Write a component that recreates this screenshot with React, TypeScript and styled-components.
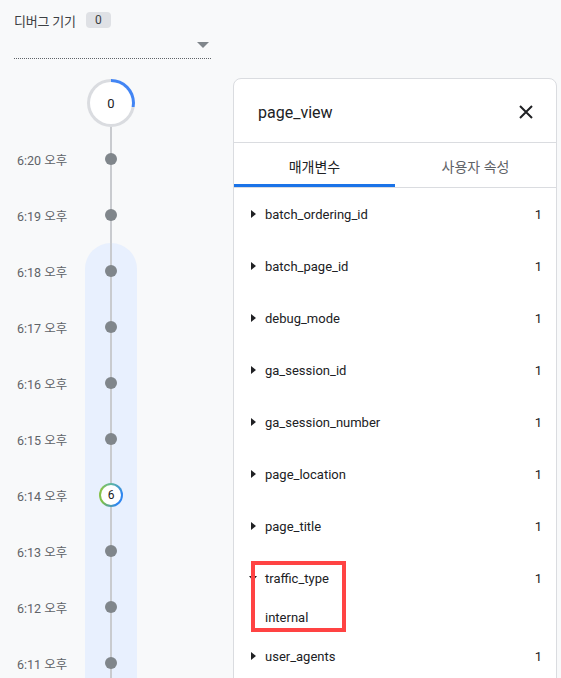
import React from 'react';
import styled, { createGlobalStyle } from 'styled-components';

const GlobalStyle = createGlobalStyle`
  html, body {
    margin: 0;
    padding: 0;
    background: #f8f9fa;
    font-family: Roboto, "Noto Sans CJK KR", "Noto Sans", sans-serif;
    color: #202124;
    overflow: hidden;
  }
  * { box-sizing: border-box; }
`;

const Page = styled.div`
  display: flex;
  width: 561px;
  height: 678px;
  overflow: hidden;
`;

const Side = styled.div`
  width: 233px;
  flex-shrink: 0;
  display: flex;
  flex-direction: column;

  & > * {
    flex-shrink: 0;
  }
`;

const DeviceHeader = styled.div`
  display: flex;
  align-items: center;
  gap: 10px;
  padding: 11px 0 0 14px;
  height: 29px;
`;

const DeviceTitle = styled.span`
  font-size: 13px;
  color: #3c4043;
  letter-spacing: -0.2px;
`;

const Badge = styled.span`
  display: inline-flex;
  align-items: center;
  justify-content: center;
  width: 25px;
  height: 16px;
  border-radius: 4px;
  background: #dfe1e5;
  font-size: 12px;
  color: #3c4043;
`;

const Dropdown = styled.div`
  margin-left: 14px;
  width: 197px;
  height: 30px;
  border-bottom: 1px dotted #5f6368;
  display: flex;
  justify-content: flex-end;
  align-items: flex-start;
  padding-top: 13px;
  padding-right: 2px;
`;

const Caret = styled.span`
  width: 0;
  height: 0;
  border-left: 6px solid transparent;
  border-right: 6px solid transparent;
  border-top: 6px solid #80868b;
`;

const Timeline = styled.div`
  margin-top: 20px;
  display: grid;
  grid-template-columns: 85px 52px;
`;

const Spacer = styled.div``;

const TopCell = styled.div`
  height: 52px;
  display: flex;
  justify-content: center;
  background: linear-gradient(#c9cbcf, #c9cbcf) center / 2px 100% no-repeat;
`;

const Ring = styled.div<{ $size: number; $ring: number; $gradient: string }>`
  width: ${({ $size }) => $size}px;
  height: ${({ $size }) => $size}px;
  border-radius: 50%;
  padding: ${({ $ring }) => $ring}px;
  background: ${({ $gradient }) => $gradient};
  flex-shrink: 0;
`;

const RingInner = styled.div<{ $font: number }>`
  width: 100%;
  height: 100%;
  border-radius: 50%;
  background: #fff;
  display: flex;
  align-items: center;
  justify-content: center;
  font-size: ${({ $font }) => $font}px;
  color: #202124;
`;

const TimeLabel = styled.div`
  height: 56px;
  display: flex;
  align-items: center;
  padding-left: 17px;
  font-size: 12.5px;
  color: #5f6368;
  white-space: nowrap;
`;

const DotCell = styled.div<{ $band: boolean; $bandStart: boolean }>`
  height: 56px;
  display: flex;
  align-items: center;
  justify-content: center;
  background: linear-gradient(#c9cbcf, #c9cbcf) center / 2px 100% no-repeat,
    ${({ $band }) => ($band ? '#e8f0fe' : 'transparent')};
  border-radius: ${({ $bandStart }) => ($bandStart ? '26px 26px 0 0' : '0')};
`;

const Dot = styled.span`
  width: 12px;
  height: 12px;
  border-radius: 50%;
  background: #80868b;
`;

const Card = styled.div`
  margin-top: 78px;
  width: 324px;
  flex-shrink: 0;
  background: #fff;
  border: 1px solid #dadce0;
  border-radius: 8px;
  align-self: flex-start;
  height: 640px;
`;

const CardHeader = styled.div`
  height: 64px;
  display: flex;
  align-items: center;
  justify-content: space-between;
  padding: 3px 22px 0 24px;
  border-bottom: 1px solid #dadce0;
`;

const EventName = styled.span`
  font-size: 16px;
  color: #202124;
`;

const Tabs = styled.div`
  display: flex;
  height: 45px;
  border-bottom: 1px solid #dadce0;
`;

const Tab = styled.div<{ $active: boolean }>`
  flex: 1;
  display: flex;
  align-items: center;
  justify-content: center;
  font-size: 14px;
  color: ${({ $active }) => ($active ? '#202124' : '#5f6368')};
  border-bottom: 3px solid ${({ $active }) => ($active ? '#1a73e8' : 'transparent')};
  padding-top: 5px;
`;

const ParamList = styled.div`
  display: flex;
  flex-direction: column;
`;

const ParamItem = styled.div`
  position: relative;
`;

const ParamRow = styled.div`
  height: 52px;
  display: flex;
  align-items: center;
  padding: 0 14px 0 17px;
  font-size: 13px;
`;

const Arrow = styled.span<{ $open: boolean }>`
  width: 0;
  height: 0;
  ${({ $open }) =>
    $open
      ? `border-left: 4px solid transparent;
         border-right: 4px solid transparent;
         border-top: 5px solid #202124;
         margin-left: -2px;
         margin-right: 8px;`
      : `border-top: 4.5px solid transparent;
         border-bottom: 4.5px solid transparent;
         border-left: 5px solid #202124;
         margin-right: 9px;`}
`;

const ParamName = styled.span`
  flex: 1;
  color: #202124;
`;

const ParamCount = styled.span`
  color: #202124;
`;

const ParamValue = styled.div`
  height: 26px;
  display: flex;
  align-items: center;
  padding-left: 31px;
  font-size: 13px;
  color: #202124;
`;

const Highlight = styled.div`
  position: absolute;
  left: 17px;
  top: 9px;
  width: 95px;
  height: 71px;
  border: 4px solid #ff4343;
  pointer-events: none;
`;

const CloseIcon = () => (
  <svg width="16" height="16" viewBox="0 0 16 16">
    <path d="M2 2L14 14M14 2L2 14" stroke="#202124" strokeWidth="2" />
  </svg>
);

const times = ['6:20', '6:19', '6:18', '6:17', '6:16', '6:15', '6:14', '6:13', '6:12', '6:11'];

const params = [
  'batch_ordering_id',
  'batch_page_id',
  'debug_mode',
  'ga_session_id',
  'ga_session_number',
  'page_location',
  'page_title',
  'traffic_type',
  'user_agents',
];

export default function App() {
  return (
    <>
      <GlobalStyle />
      <Page>
        <Side>
          <DeviceHeader>
            <DeviceTitle>디버그 기기</DeviceTitle>
            <Badge>0</Badge>
          </DeviceHeader>
          <Dropdown>
            <Caret />
          </Dropdown>
          <Timeline>
            <Spacer />
            <TopCell>
              <Ring
                $size={48}
                $ring={3}
                $gradient="conic-gradient(#4285f4 0deg 100deg, #dadce0 100deg 360deg)"
              >
                <RingInner $font={13}>0</RingInner>
              </Ring>
            </TopCell>
            {times.map((t, i) => (
              <React.Fragment key={t}>
                <TimeLabel>{t} 오후</TimeLabel>
                <DotCell $band={i >= 2} $bandStart={i === 2}>
                  {t === '6:14' ? (
                    <Ring
                      $size={24}
                      $ring={2}
                      $gradient="conic-gradient(#5fb7a0 0deg, #2f86f0 80deg, #2f86f0 150deg, #7cbf4a 230deg, #8bc34a 300deg, #5fb7a0 360deg)"
                    >
                      <RingInner $font={12}>6</RingInner>
                    </Ring>
                  ) : (
                    <Dot />
                  )}
                </DotCell>
              </React.Fragment>
            ))}
          </Timeline>
        </Side>
        <Card>
          <CardHeader>
            <EventName>page_view</EventName>
            <CloseIcon />
          </CardHeader>
          <Tabs>
            <Tab $active>매개변수</Tab>
            <Tab $active={false}>사용자 속성</Tab>
          </Tabs>
          <ParamList>
            {params.map((p) => {
              const open = p === 'traffic_type';
              return (
                <ParamItem key={p}>
                  <ParamRow>
                    <Arrow $open={open} />
                    <ParamName>{p}</ParamName>
                    <ParamCount>1</ParamCount>
                  </ParamRow>
                  {open && (
                    <>
                      <ParamValue>internal</ParamValue>
                      <Highlight />
                    </>
                  )}
                </ParamItem>
              );
            })}
          </ParamList>
        </Card>
      </Page>
    </>
  );
}
